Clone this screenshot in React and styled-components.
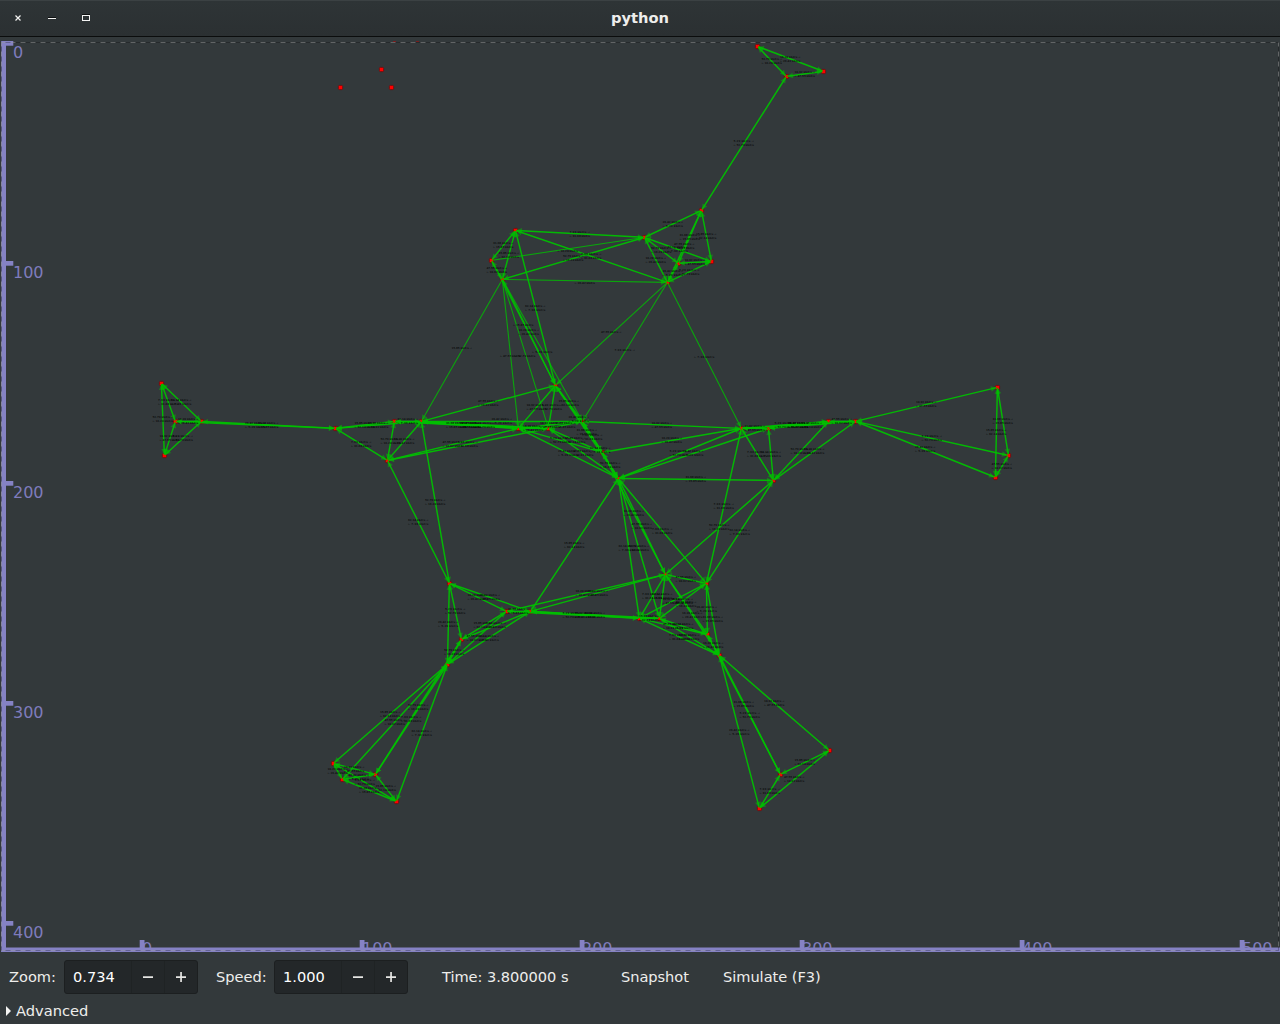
import React from "react";
import styled, { createGlobalStyle } from "styled-components";

const GlobalStyle = createGlobalStyle`
  html, body { margin: 0; padding: 0; background: #33393b; }
  * { box-sizing: border-box; }
`;

const Window = styled.div`
  width: 1280px;
  height: 1024px;
  display: grid;
  grid-template-rows: 37px 915px 50px 22px;
  overflow: hidden;
  background: #33393b;
  color: #eeeeec;
  font-family: "DejaVu Sans", sans-serif;
  font-size: 14.667px;
`;

const TitleBar = styled.header`
  display: grid;
  grid-template-columns: 1fr auto 1fr;
  align-items: center;
  padding-bottom: 2px;
  background: linear-gradient(#2e3436, #2b3032);
  border-top: 1px solid #3b4143;
  border-bottom: 1px solid #0b0d0d;
`;

const WindowButtons = styled.div`
  display: flex;
  gap: 18px;
  padding-left: 10px;
`;

const WindowButton = styled.button`
  width: 16px;
  height: 16px;
  padding: 0;
  border: 0;
  background: none;
  color: #f4f4f3;
  svg { display: block; }
`;

const Title = styled.h1`
  margin: 0;
  font-size: 14.667px;
  line-height: 18px;
  font-weight: bold;
`;

const Canvas = styled.svg`
  display: block;
  width: 1280px;
  height: 915px;
`;

const RulerText = styled.text`
  font-family: "DejaVu Sans", sans-serif;
  font-size: 16px;
  fill: #7f7cbd;
`;

const RateText = styled.text`
  font-family: "DejaVu Sans", sans-serif;
  font-size: 2.75px;
  font-weight: bold;
  fill: #000;
  fill-opacity: 0.7;
`;

const Toolbar = styled.div`
  display: flex;
  align-items: center;
  padding-left: 9px;
  font-size: 14.6px;
  white-space: nowrap;
`;

const Label = styled.label`
  width: ${(p) => p.$width}px;
  padding-bottom: 2px;
`;

const Spin = styled.div`
  display: grid;
  grid-template-columns: 1fr 33px 33px;
  width: 134px;
  height: 34px;
  margin-right: ${(p) => p.$after}px;
  border: 1px solid #1c1f20;
  border-radius: 3px;
  background: #232729;
  overflow: hidden;
`;

const SpinValue = styled.span`
  padding-left: 8px;
  line-height: 32px;
  color: #fff;
`;

const SpinButton = styled.button`
  display: flex;
  align-items: center;
  justify-content: center;
  padding: 0;
  border: 0;
  border-left: 1px solid #1f2324;
  background: none;
  color: #e6e6e4;
`;

const Time = styled.span`
  width: 179px;
  padding-bottom: 2px;
  letter-spacing: -0.04px;
`;

const FlatButton = styled.button`
  width: ${(p) => p.$width}px;
  padding: 0 0 2px;
  border: 0;
  background: none;
  color: inherit;
  font: inherit;
  letter-spacing: -0.04px;
  text-align: left;
`;

const Expander = styled.div`
  display: flex;
  align-items: center;
  gap: 5px;
  height: 18px;
  padding-left: 6px;
`;

const ExpanderLabel = styled.span`
  padding-bottom: 2px;
`;

const NODES = {
  A: [757, 46], B: [786, 76], C: [823, 71], D: [701, 210],
  E: [515, 230], F: [491, 260], G: [502, 279],
  H: [644, 237], I: [711, 261], J: [678, 263], K: [667, 282],
  L: [555, 385],
  M: [161, 383], N: [175, 421], O: [201, 421], P: [164, 455],
  Q: [335, 428], R: [394, 421], S: [421, 421], T: [387, 460],
  U: [518, 428], V: [548, 428], W: [582, 421], X: [602, 452], Y: [618, 478],
  Z: [741, 428], a: [768, 428], b: [828, 421], c: [855, 421], d: [773, 480],
  e: [997, 387], f: [1008, 455], g: [995, 477],
  h: [449, 583], i: [506, 611], j: [530, 611], k: [461, 639], l: [447, 664],
  m: [665, 574], n: [706, 583], o: [639, 618], p: [659, 618], q: [707, 634], r: [719, 655],
  s: [333, 763], t: [342, 779], u: [375, 774], v: [396, 801],
  w: [829, 750], x: [780, 774], y: [759, 808],
};

const LONE_NODES = [[340, 87], [381, 69], [391, 87]];
const CLIPPED_NODES = [394, 417];

const LINKS = (
  "AB AC BC BD DH DJ DI DK EH HI HJ HK IJ IK JK EF EG FG EK EL GH GL " +
  "LU LV LX LY LW SL MN MO MP NO NP OP NQ OQ QR QS QT RS RT ST SU SV SW RU RV TU TV Th Sh " +
  "UV UW UX UY VW VX VY WX WY XY XZ WZ YZ Ya Yd jY Ym Yn Yo Yp Xm " +
  "Za Zb Zc ab ac bc Zd ad bd cd ce cf cg ef eg fg Zn dn md " +
  "hi hj hk hl ij ik il jk jl kl im jm io jo jp " +
  "ls lt lu lv ku st su sv tu tv uv " +
  "mn mo mp mq mr no np nq nr op oq or pq pr qr rw rx ry qx wx wy xy"
).split(" ");

// One-way links: "+" carries only the forward rate, "-" only the return rate.
const ONE_WAY = ["FH-", "GK-", "GU-", "GV-", "GW-", "FL-", "GS+", "KL+", "KW+", "KZ-"];

const RATES = ["52.79", "16.20", "10.92", "5.29", "26.42", "31.68", "15.85", "47.55", "7.93", "62.14"];

function ends(id) {
  const [x1, y1] = NODES[id[0]];
  const [x2, y2] = NODES[id[1]];
  const len = Math.hypot(x2 - x1, y2 - y1);
  const ux = (x2 - x1) / len;
  const uy = (y2 - y1) / len;
  return { x1: x1 + 0.4, y1: y1 + 0.4, x2: x2 + 0.4, y2: y2 + 0.4, ux, uy };
}

function head(x, y, ux, uy) {
  const bx = x - ux * 6.5;
  const by = y - uy * 6.5;
  const tx = x - ux;
  const ty = y - uy;
  return `M${tx} ${ty}L${bx - uy * 2.8} ${by + ux * 2.8}L${bx + uy * 2.8} ${by - ux * 2.8}Z`;
}

function Link({ id, twoWay }) {
  const { x1, y1, x2, y2, ux, uy } = ends(id);
  return (
    <g>
      <line
        x1={x1 + ux} y1={y1 + uy} x2={x2 - ux} y2={y2 - uy}
        stroke="#00c000" strokeWidth={twoWay ? 1.45 : 1.1} strokeOpacity={twoWay ? 0.95 : 0.8}
      />
      <path d={head(x2, y2, ux, uy)} fill="#00c000" fillOpacity="0.5" />
      {twoWay && <path d={head(x1, y1, -ux, -uy)} fill="#00c000" fillOpacity="0.5" />}
    </g>
  );
}

function Rates({ id, index, forward, back }) {
  const { x1, y1, x2, y2 } = ends(id);
  const left = (x1 + x2) / 2 - 10.5;
  const cy = (y1 + y2) / 2;
  return (
    <g>
      {forward && <RateText x={left} y={cy - 1.2} textLength="20.5">{RATES[index % 10]} kbit/s →</RateText>}
      {back && <RateText x={left} y={cy + 2.8} textLength="20.5">← {RATES[(index * 3 + 1) % 10]} kbit/s</RateText>}
    </g>
  );
}

function Dot({ x, y }) {
  return <rect x={x - 1.6} y={y - 1.6} width="4.2" height="4.2" rx="1" fill="#ff0000" stroke="#700c0c" strokeWidth="0.8" />;
}

function Rulers() {
  const fill = "#8582c4";
  return (
    <g>
      {[0, 1, 2, 3, 4].map((n) => (
        <g key={n}>
          <rect x="2" y={41 + n * 220} width="11.3" height="4.7" fill={fill} />
          <RulerText x="13" y={57.6 + n * 220}>{n * 100}</RulerText>
        </g>
      ))}
      {[0, 1, 2, 3, 4, 5].map((n) => (
        <g key={n}>
          <RulerText x={142 + n * 220} y="954">{n * 100}</RulerText>
          <rect x={139.7 + n * 220} y="940" width="4.8" height="9" fill={fill} />
        </g>
      ))}
      <rect x="1.2" y="41" width="4.8" height="911" fill={fill} />
      <rect x="1.2" y="947.5" width="1278.8" height="4.5" fill={fill} />
      <rect x="1.5" y="42.5" width="1277" height="908" fill="none" stroke="#000" strokeOpacity="0.25" />
      <path
        d="M1.5 42.5H1278.5 M1278.5 42.5V950.5 M1.5 950.5H1278.5 M1.5 42.5V950.5"
        fill="none" stroke="#fff" strokeOpacity="0.28" strokeDasharray="5 5" strokeDashoffset="1"
      />
    </g>
  );
}

function NetworkView() {
  return (
    <Canvas viewBox="0 37 1280 915">
      {Object.entries(NODES).map(([id, [x, y]]) => <Dot key={id} x={x} y={y} />)}
      {LONE_NODES.map(([x, y]) => <Dot key={x} x={x} y={y} />)}
      {CLIPPED_NODES.map((x) => <rect key={x} x={x - 1} y="41" width="3" height="1" fill="#7a1c1d" />)}
      {LINKS.map((id) => <Link key={id} id={id} twoWay />)}
      {ONE_WAY.map((id) => <Link key={id} id={id} />)}
      {LINKS.map((id, n) => <Rates key={id} id={id} index={n} forward back />)}
      {ONE_WAY.map((id, n) => (
        <Rates key={id} id={id} index={n} forward={id[2] === "+"} back={id[2] === "-"} />
      ))}
      <Rulers />
    </Canvas>
  );
}

function SpinBox({ value, after }) {
  return (
    <Spin $after={after}>
      <SpinValue>{value}</SpinValue>
      <SpinButton aria-label="decrease">
        <svg width="12" height="12"><path d="M1 5.3H11V7H1Z" fill="currentColor" /></svg>
      </SpinButton>
      <SpinButton aria-label="increase">
        <svg width="12" height="12"><path d="M1 5.2H5.2V1H6.9V5.2H11V6.9H6.9V11H5.2V6.9H1Z" fill="currentColor" /></svg>
      </SpinButton>
    </Spin>
  );
}

export default function App() {
  return (
    <Window>
      <GlobalStyle />
      <TitleBar>
        <WindowButtons>
          <WindowButton aria-label="close">
            <svg width="16" height="16"><path d="M5.5 5.5L10.5 10.5M10.5 5.5L5.5 10.5" stroke="currentColor" strokeWidth="1.2" /></svg>
          </WindowButton>
          <WindowButton aria-label="minimize">
            <svg width="16" height="16"><path d="M4 8.5H12" stroke="currentColor" /><path d="M4 7.5H12" stroke="#101213" /></svg>
          </WindowButton>
          <WindowButton aria-label="maximize">
            <svg width="16" height="16"><path d="M4 4.5H12" stroke="#101213" /><rect x="4.5" y="5.5" width="7" height="5" fill="none" stroke="currentColor" /></svg>
          </WindowButton>
        </WindowButtons>
        <Title>python</Title>
      </TitleBar>
      <NetworkView />
      <Toolbar>
        <Label $width={55}>Zoom:</Label>
        <SpinBox value="0.734" after={18} />
        <Label $width={58}>Speed:</Label>
        <SpinBox value="1.000" after={34} />
        <Time>Time: 3.800000 s</Time>
        <FlatButton $width={102}>Snapshot</FlatButton>
        <FlatButton $width={100}>Simulate (F3)</FlatButton>
      </Toolbar>
      <Expander>
        <svg width="5" height="10"><path d="M0 0L5 5L0 10Z" fill="#f4f4f3" /></svg>
        <ExpanderLabel>Advanced</ExpanderLabel>
      </Expander>
    </Window>
  );
}
